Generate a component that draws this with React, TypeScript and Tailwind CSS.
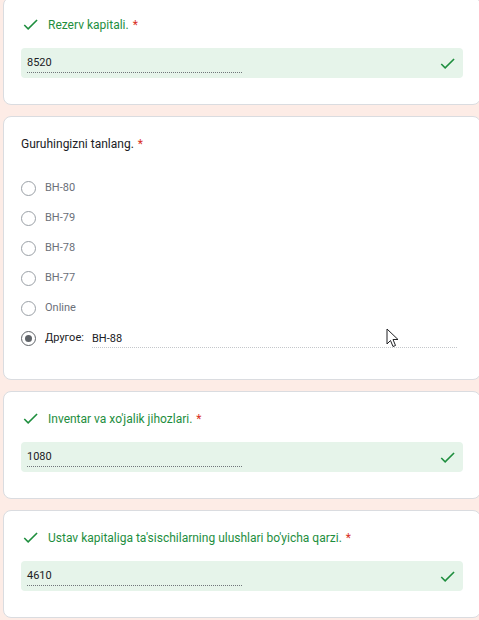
import React from "react";

const font = { fontFamily: "Roboto, 'Noto Sans', Arial, sans-serif" };

function Check({ className }: { className?: string }) {
  return (
    <svg viewBox="0 0 24 24" className={className} fill="#1e8e3e">
      <path d="M9 16.17L4.83 12l-1.42 1.41L9 19 21 7l-1.41-1.41z" />
    </svg>
  );
}

function Card({ children, className }: { children: React.ReactNode; className?: string }) {
  return (
    <div
      className={
        "ml-[3px] w-[478px] shrink-0 rounded-lg border border-[#dadce0] bg-white pl-[17px] pr-[17px] pt-[17px] pb-[26px] " +
        (className ?? "")
      }
    >
      {children}
    </div>
  );
}

function Star() {
  return <span className="ml-[4px] text-[#d93025]">*</span>;
}

function AnswerCard({ label, value, className }: { label: string; value: string; className?: string }) {
  return (
    <Card className={className}>
      <div className="flex h-[19px] items-center gap-[8px]">
        <Check className="h-[19px] w-[19px]" />
        <span className="text-[12px] text-[#1e8e3e]">
          {label}
          <Star />
        </span>
      </div>
      <div className="mt-[14px] flex h-[30px] items-center justify-between rounded-[4px] bg-[#e6f4ea] pl-[6px] pr-[6px]">
        <div className="w-[215px] border-b border-dotted border-[#70757a] pb-[2px] pt-[3px] text-[11px] leading-[14px] text-[#202124]">
          {value}
        </div>
        <Check className="h-[19px] w-[19px]" />
      </div>
    </Card>
  );
}

function Radio({ selected }: { selected?: boolean }) {
  return (
    <span
      className={
        "flex h-[15px] w-[15px] shrink-0 items-center justify-center rounded-full border-[1.5px] " +
        (selected ? "border-[#5f6368]" : "border-[#9aa0a6]")
      }
    >
      {selected && <span className="h-[7px] w-[7px] rounded-full bg-[#5f6368]" />}
    </span>
  );
}

export default function App() {
  const options = ["BH-80", "BH-79", "BH-78", "BH-77", "Online"];
  return (
    <div className="relative h-[620px] w-[479px] overflow-hidden bg-[#fdece6]" style={font}>
      <div className="mt-[-3px] flex flex-col gap-[11px]">
        <AnswerCard label="Rezerv kapitali." value="8520" />

        <Card className="h-[264px]">
          <div className="flex h-[19px] items-center">
            <span className="text-[12px] text-[#202124]">
              Guruhingizni tanlang.
              <Star />
            </span>
          </div>
          <div className="mt-[20px] flex flex-col">
            {options.map((o) => (
              <div key={o} className="flex h-[30px] items-center gap-[9px]">
                <Radio />
                <span className="text-[11px] text-[#6b7079]">{o}</span>
              </div>
            ))}
            <div className="flex h-[30px] items-center">
              <Radio selected />
              <span className="ml-[9px] w-[47px] text-[11px] text-[#202124]">Другое:</span>
              <div className="w-[365px] border-b border-dotted border-[#c4c7cb] pt-[4px] pb-[1px] text-[11px] leading-[14px] text-[#202124]">
                BH-88
              </div>
            </div>
          </div>
        </Card>

        <AnswerCard label="Inventar va xo'jalik jihozlari." value="1080" />
        <AnswerCard label="Ustav kapitaliga ta'sischilarning ulushlari bo'yicha qarzi." value="4610" />
      </div>

      <svg
        className="absolute left-[386px] top-[328px]"
        width="14"
        height="21"
        viewBox="0 0 14 21"
      >
        <path
          d="M1 1 L1 16 L4.5 12.5 L7 18.5 L9.5 17.5 L7 11.5 L12 11.5 Z"
          fill="white"
          stroke="#202124"
          strokeWidth="1"
          strokeLinejoin="round"
        />
      </svg>
    </div>
  );
}
